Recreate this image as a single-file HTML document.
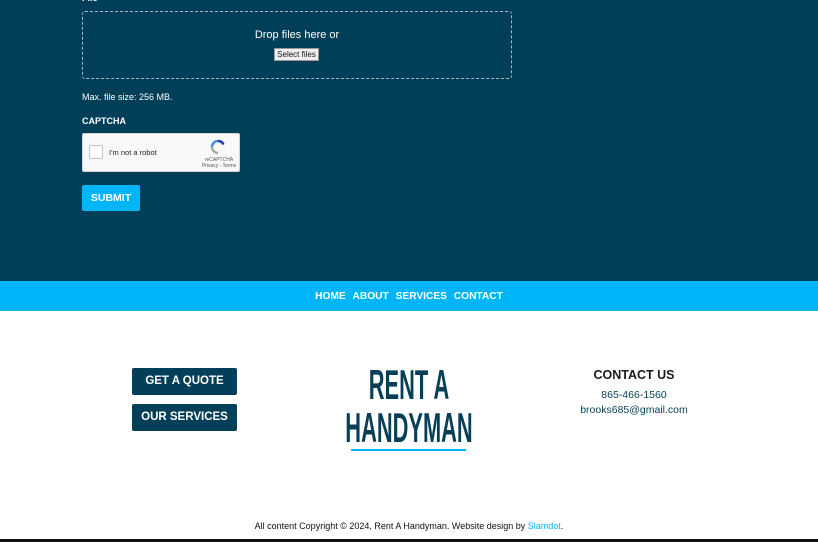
<!DOCTYPE html>
<html><head><style>
*{margin:0;padding:0;box-sizing:border-box}
body{width:818px;height:542px;overflow:hidden;font-family:"Liberation Sans",sans-serif;background:#fff;position:relative}
.top{position:absolute;left:0;top:0;width:818px;height:281px;background:#013e58}
.abs{position:absolute}
.drop{left:82px;top:11px;width:430px;height:68px;border:1px dashed #a8bcc6;border-radius:3px}
.nav{top:281px;left:0;width:818px;height:30px;background:#00b5f7;text-align:center;color:#fff;font-weight:bold;font-size:10.2px;line-height:31px}
.nav span{margin:0 2px}
.btn{left:132px;width:105px;height:27px;background:#033f58;color:#fff;font-weight:bold;font-size:11.5px;text-align:center;line-height:27px;border-radius:2px}
.logo{width:300px;left:259px;text-align:center;color:#063f57;font-family:"Liberation Sans Narrow","Liberation Sans",sans-serif;font-weight:bold;font-size:42px;transform:scaleX(0.52)}
</style></head><body>
<div class="top"></div>
<div class="abs" style="left:82px;top:-7px;color:#fff;font-size:9px;font-weight:bold">File</div>
<div class="abs drop"></div>
<div class="abs" style="left:82px;top:29px;width:430px;text-align:center;color:#fff;font-size:11px">Drop files here or</div>
<div class="abs" style="left:274px;top:48px;width:45px;height:13px;background:#f0f0f0;border:1px solid #999;font-size:8px;line-height:11px;text-align:center;color:#111">Select files</div>
<div class="abs" style="left:82px;top:92px;color:#fff;font-size:9px">Max. file size: 256 MB.</div>
<div class="abs" style="left:82px;top:116px;color:#fff;font-size:9px;font-weight:bold">CAPTCHA</div>
<div class="abs" style="left:82px;top:133px;width:158px;height:39px;background:#f9f9f9;border:1px solid #d3d3d3;border-radius:2px"></div>
<div class="abs" style="left:89px;top:145px;width:14px;height:14px;background:#fff;border:1px solid #c1c1c1;border-radius:2px"></div>
<div class="abs" style="left:109px;top:148px;font-size:7.5px;color:#222">I'm not a robot</div>
<svg class="abs" style="left:210px;top:139px" width="16" height="16" viewBox="0 0 16 16"><path d="M8 2a6 6 0 0 1 5.5 3.5" stroke="#1c3aa9" stroke-width="2.5" fill="none"/><path d="M2 8a6 6 0 0 1 6-6" stroke="#4a90e2" stroke-width="2.5" fill="none"/><path d="M8 14a6 6 0 0 1-6-6" stroke="#aaa" stroke-width="2.5" fill="none"/></svg>
<div class="abs" style="left:201px;top:157px;font-size:5px;color:#555;width:36px;text-align:center">reCAPTCHA<br>Privacy - Terms</div>
<div class="abs" style="left:82px;top:185px;width:58px;height:26px;background:#00b5f7;border-radius:2px;color:#fff;font-weight:bold;font-size:10.5px;text-align:center;line-height:27px">SUBMIT</div>
<div class="abs nav"><span>HOME</span> <span>ABOUT</span> <span>SERVICES</span> <span>CONTACT</span></div>
<div class="abs btn" style="top:368px">GET A QUOTE</div>
<div class="abs btn" style="top:404px">OUR SERVICES</div>
<div class="abs logo" style="top:361px">RENT A</div>
<div class="abs logo" style="top:404px">HANDYMAN</div>
<div class="abs" style="left:351px;top:449px;width:115px;height:2px;background:#00b5f7"></div>
<div class="abs" style="left:534px;top:368px;width:200px;text-align:center;font-size:12.5px;font-weight:bold;color:#1a1a1a">CONTACT US</div>
<div class="abs" style="left:534px;top:389px;width:200px;text-align:center;font-size:10.5px;color:#063f57">865-466-1560</div>
<div class="abs" style="left:534px;top:404px;width:200px;text-align:center;font-size:10.5px;color:#063f57">brooks685@gmail.com</div>
<div class="abs" style="left:0;top:521px;width:818px;text-align:center;font-size:9px;color:#111">All content Copyright © 2024, Rent A Handyman. Website design by <span style="color:#00b5f7">Slamdot</span>.</div>
<div class="abs" style="left:0;top:539px;width:818px;height:3px;background:#111"></div>
</body></html>
